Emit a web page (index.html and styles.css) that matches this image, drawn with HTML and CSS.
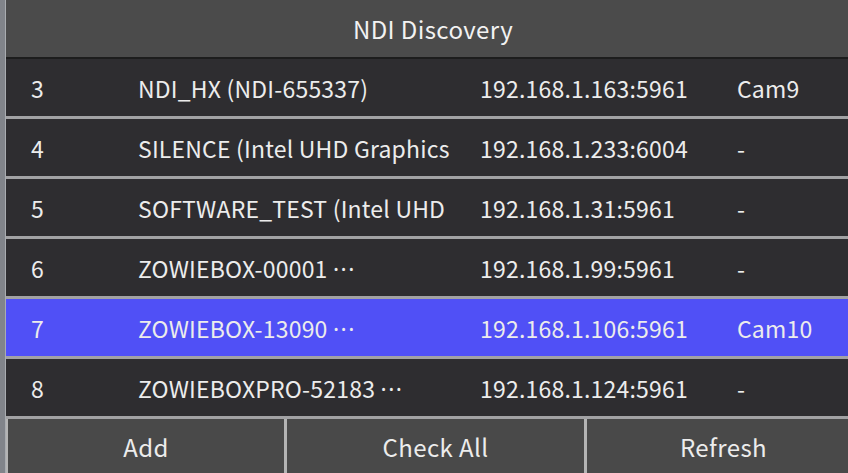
FILE: index.html
```html
<!DOCTYPE html>
<html lang="en">

<head>
    <meta charset="UTF-8">
    <meta name="viewport" content="width=device-width, initial-scale=1.0">
    <title>NDI Discovery</title>
    <link rel="stylesheet" href="styles.css">
</head>

<body>
    <div class="shell">
        <div class="side"></div>

        <main class="panel">
            <div class="titulo">NDI Discovery</div>

            <div class="lista">
                <div class="fila">
                    <span>3</span>
                    <span>NDI_HX (NDI-655337)</span>
                    <span>192.168.1.163:5961</span>
                    <span>Cam9</span>
                </div>
                <div class="fila">
                    <span>4</span>
                    <span>SILENCE (Intel UHD Graphics</span>
                    <span>192.168.1.233:6004</span>
                    <span>-</span>
                </div>
                <div class="fila">
                    <span>5</span>
                    <span>SOFTWARE_TEST (Intel UHD</span>
                    <span>192.168.1.31:5961</span>
                    <span>-</span>
                </div>
                <div class="fila">
                    <span>6</span>
                    <span>ZOWIEBOX-00001 <i class="mas">···</i></span>
                    <span>192.168.1.99:5961</span>
                    <span>-</span>
                </div>
                <div class="fila activa">
                    <span>7</span>
                    <span>ZOWIEBOX-13090 <i class="mas">···</i></span>
                    <span>192.168.1.106:5961</span>
                    <span>Cam10</span>
                </div>
                <div class="fila">
                    <span>8</span>
                    <span>ZOWIEBOXPRO-52183 <i class="mas">···</i></span>
                    <span>192.168.1.124:5961</span>
                    <span>-</span>
                </div>
            </div>

            <div class="acciones">
                <button class="btn-add">Add</button>
                <button class="btn-check">Check All</button>
                <button class="btn-refresh">Refresh</button>
            </div>
        </main>
    </div>
</body>

</html>
```

FILE: styles.css
```css
* {
    box-sizing: border-box;
}

body {
    margin: 0;
    background: #2e2d30;
    font-family: "Noto Sans CJK SC", "Noto Sans", sans-serif;
    color: #ececec;
    overflow: hidden;
}

.shell {
    display: flex;
    height: 473px;
}

.side {
    width: 6px;
    background: #81848a;
    border-right: 1px solid #a9acb0;
}

.panel {
    flex: 1;
    display: flex;
    flex-direction: column;
}

.titulo {
    height: 59px;
    background: #4b4b4b;
    border-bottom: 2px solid #1d1d1d;
    display: flex;
    align-items: center;
    justify-content: center;
    padding-left: 12px;
    font-size: 24px;
    letter-spacing: 0.4px;
    color: #f2f2f2;
}

.fila {
    height: 60px;
    display: grid;
    grid-template-columns: 107px 342px 257px 1fr;
    align-items: center;
    padding-left: 25px;
    background: #2e2d30;
    border-bottom: 3px solid #a2a2a4;
    font-size: 23px;
    letter-spacing: 0.2px;
    white-space: nowrap;
    overflow: hidden;
}

.fila span {
    overflow: hidden;
}

/* puntos a media altura del nombre recortado */
.mas {
    font-style: normal;
    font-family: "Noto Sans", sans-serif;
    letter-spacing: 1.5px;
}

.fila.activa {
    background: #5050f6;
}

.acciones {
    flex: 1;
    display: flex;
    gap: 3px;
    background: #b4b4b4;
    padding-left: 2px;
}

.acciones button {
    border: none;
    background: #494949;
    color: #ececec;
    font-family: inherit;
    font-size: 24px;
    letter-spacing: 0.4px;
    padding: 0;
}

.btn-add {
    width: 276px;
}

.btn-check {
    width: 297px;
}

.btn-refresh {
    flex: 1;
    padding-left: 12px !important;
}
```
